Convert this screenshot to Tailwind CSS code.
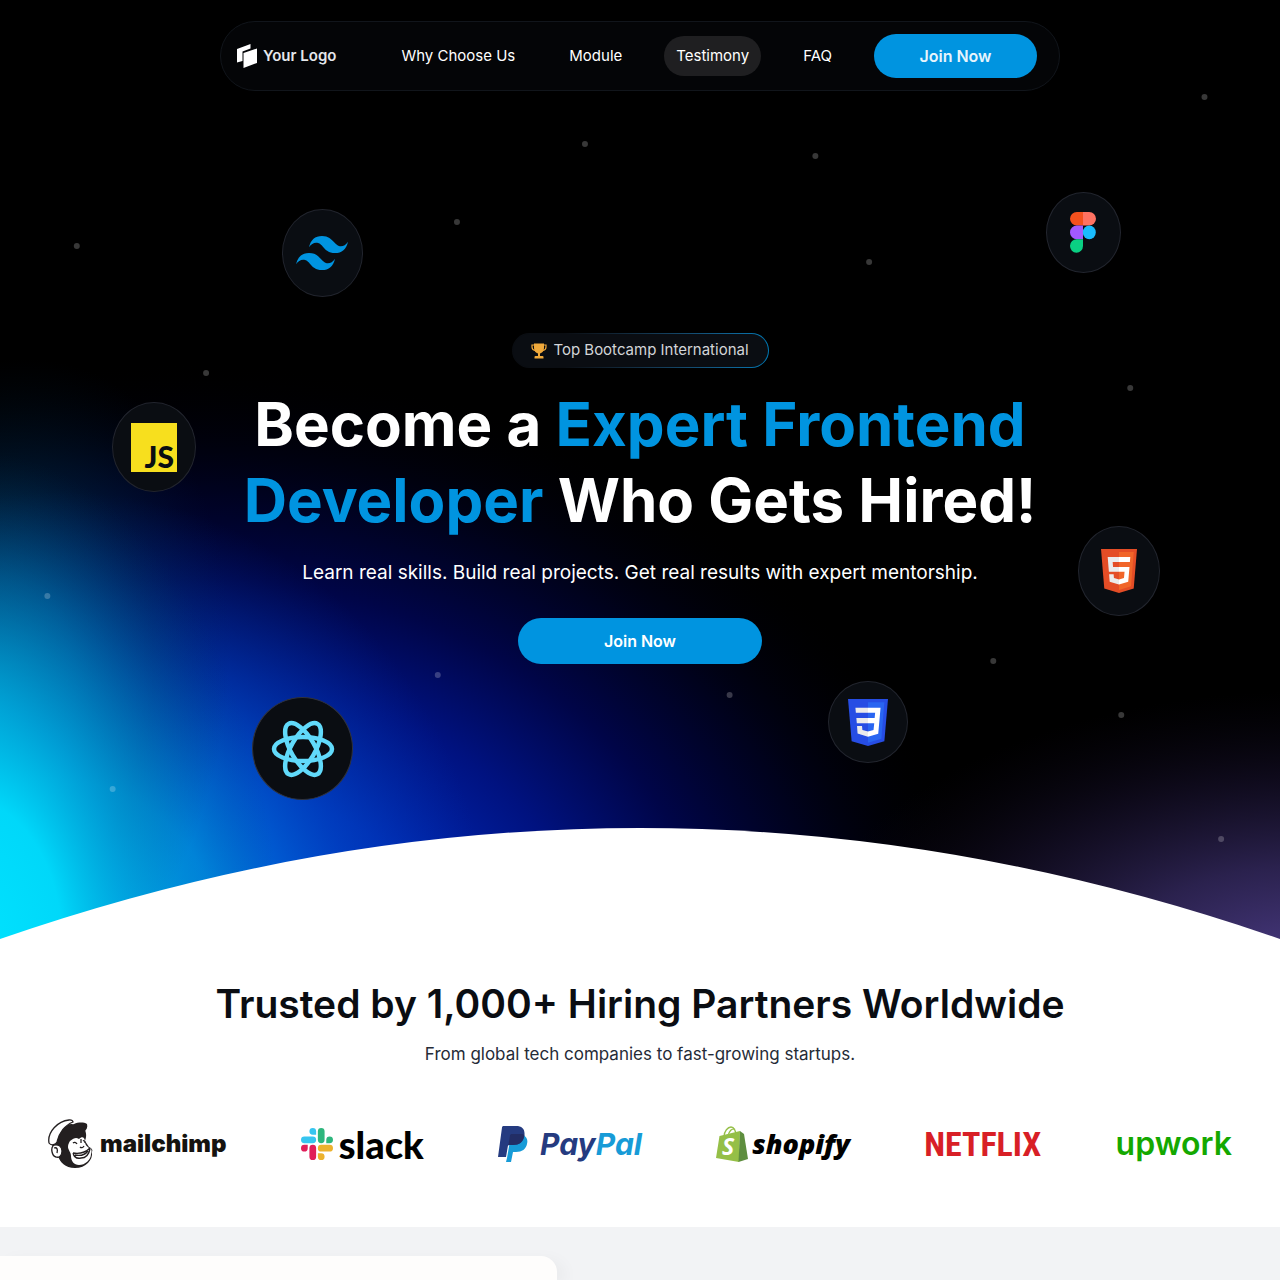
<!DOCTYPE html>
<html lang="en">
<head>
<meta charset="utf-8">
<meta name="viewport" content="width=device-width, initial-scale=1">
<title>Frontend Bootcamp</title>
<script src="https://cdn.jsdelivr.net/npm/@tailwindcss/browser@4"></script>
</head>
<body class="bg-white font-['Inter',sans-serif] text-[#0a0d12] overflow-x-hidden">

<section class="relative flex flex-col items-center overflow-hidden bg-black pt-[21px] text-white">
  <!-- Aurora glow -->
  <svg class="absolute inset-0 h-full w-full" viewBox="0 0 1280 938" preserveAspectRatio="none" aria-hidden="true">
    <defs>
      <radialGradient id="navy" gradientUnits="userSpaceOnUse" cx="0" cy="0" r="1" gradientTransform="translate(220 970) rotate(6) scale(780 610)">
        <stop offset="0" stop-color="#0038d0"/><stop offset=".3" stop-color="#0026b0"/><stop offset=".48" stop-color="#001280"/><stop offset=".64" stop-color="#000548"/><stop offset=".8" stop-color="#00021e" stop-opacity=".9"/><stop offset="1" stop-color="#000" stop-opacity="0"/>
      </radialGradient>
      <radialGradient id="azure" gradientUnits="userSpaceOnUse" cx="0" cy="0" r="1" gradientTransform="translate(50 970) rotate(10) scale(440 480)">
        <stop offset="0" stop-color="#00b4f8"/><stop offset=".4" stop-color="#0090ec" stop-opacity=".85"/><stop offset=".7" stop-color="#005cd0" stop-opacity=".4"/><stop offset="1" stop-color="#0038b0" stop-opacity="0"/>
      </radialGradient>
      <radialGradient id="cyan" gradientUnits="userSpaceOnUse" cx="0" cy="0" r="1" gradientTransform="translate(-30 950) scale(310 500)">
        <stop offset="0" stop-color="#00e4ff"/><stop offset=".3" stop-color="#00dcfc" stop-opacity=".95"/><stop offset=".5" stop-color="#00b8e4" stop-opacity=".6"/><stop offset=".75" stop-color="#0088b0" stop-opacity=".25"/><stop offset="1" stop-color="#004060" stop-opacity="0"/>
      </radialGradient>
      <radialGradient id="teal" gradientUnits="userSpaceOnUse" cx="0" cy="0" r="1" gradientTransform="translate(-30 720) rotate(16) scale(250 370)">
        <stop offset="0" stop-color="#00b0d4" stop-opacity=".7"/><stop offset=".4" stop-color="#007ca4" stop-opacity=".45"/><stop offset=".7" stop-color="#004468" stop-opacity=".25"/><stop offset="1" stop-color="#002050" stop-opacity="0"/>
      </radialGradient>
      <radialGradient id="violet" gradientUnits="userSpaceOnUse" cx="0" cy="0" r="1" gradientTransform="translate(1310 980) scale(520 290)">
        <stop offset="0" stop-color="#4f3f8c"/><stop offset=".4" stop-color="#2f2556" stop-opacity=".9"/><stop offset=".7" stop-color="#150f28" stop-opacity=".7"/><stop offset="1" stop-color="#0a0614" stop-opacity="0"/>
      </radialGradient>
    </defs>
    <rect width="1280" height="938" fill="url(#navy)"/>
    <rect width="1280" height="938" fill="url(#azure)"/>
    <rect width="1280" height="938" fill="url(#teal)"/>
    <rect width="1280" height="938" fill="url(#cyan)"/>
    <rect width="1280" height="938" fill="url(#violet)"/>
  </svg>
  <!-- Stars -->
  <svg class="absolute inset-0 h-full w-full" fill="#fff" fill-opacity=".22" aria-hidden="true">
    <circle cx="6%" cy="246" r="3"/><circle cx="35.7%" cy="222" r="3"/><circle cx="45.7%" cy="144" r="3"/><circle cx="63.7%" cy="156" r="3"/><circle cx="94.1%" cy="97" r="3"/><circle cx="67.9%" cy="262" r="3"/><circle cx="16.1%" cy="373" r="3"/><circle cx="88.3%" cy="388" r="3"/><circle cx="3.7%" cy="596" r="3"/><circle cx="34.2%" cy="675" r="3"/><circle cx="57%" cy="695" r="3"/><circle cx="77.6%" cy="661" r="3"/><circle cx="87.6%" cy="715" r="3"/><circle cx="8.8%" cy="789" r="3"/><circle cx="95.4%" cy="839" r="3"/>
  </svg>

  <!-- Floating technology badges -->
  <div class="absolute left-[22%] top-[209px] flex h-[88px] w-[81px] items-center justify-center rounded-[50%] border border-[#22252e] bg-[#0a0d12]">
    <svg class="h-[34px] w-[52px]" viewBox="0 4.8 24 14.4" preserveAspectRatio="none" fill="#0094e0" aria-hidden="true"><path d="M12 4.8c-3.2 0-5.2 1.6-6 4.8 1.2-1.6 2.6-2.2 4.2-1.8.913.228 1.565.89 2.288 1.624C13.666 10.618 15.027 12 18 12c3.2 0 5.2-1.6 6-4.8-1.2 1.6-2.6 2.2-4.2 1.8-.913-.228-1.565-.89-2.288-1.624C16.337 6.182 14.976 4.8 12 4.8zM6 12c-3.2 0-5.2 1.6-6 4.8 1.2-1.6 2.6-2.2 4.2-1.8.913.228 1.565.89 2.288 1.624C7.666 17.818 9.027 19.2 12 19.2c3.2 0 5.2-1.6 6-4.8-1.2 1.6-2.6 2.2-4.2 1.8-.913-.228-1.565-.89-2.288-1.624C10.337 13.382 8.976 12 6 12z"/></svg>
  </div>
  <div class="absolute left-[81.7%] top-[192px] flex h-[81px] w-[75px] items-center justify-center rounded-[50%] border border-[#22252e] bg-[#0a0d12]">
    <svg class="h-[41px] w-[26px]" viewBox="0 0 26 41" aria-hidden="true"><path d="M13 0H6.800a6.800 6.800 0 0 0 0 13.600H13z" fill="#f4511e"/><path d="M13 0h6.200a6.800 6.800 0 0 1 0 13.600H13z" fill="#ff7262"/><path d="M13 13.600H6.800a6.800 6.800 0 0 0 0 13.600H13z" fill="#a259ff"/><ellipse cx="19.300" cy="20.400" rx="6.500" ry="6.800" fill="#1abcfe"/><path d="M13 27.200H6.800A6.500 6.800 0 1 0 13 34z" fill="#0acf83"/></svg>
  </div>
  <div class="absolute left-[8.75%] top-[402px] flex h-[90px] w-[84px] items-center justify-center rounded-[50%] border border-[#22252e] bg-[#0a0d12]">
    <div class="flex h-[49px] w-[46px] items-end justify-end bg-[#f7df1e] pr-[3px] font-['Lato',sans-serif] text-[30px] leading-[32px] font-black text-[#0a0d12]">JS</div>
  </div>
  <div class="absolute left-[84.2%] top-[526px] flex h-[90px] w-[82px] items-center justify-center rounded-[50%] border border-[#22252e] bg-[#0a0d12]">
    <svg class="h-[44px] w-[36px]" viewBox="1.500 0 21 24" preserveAspectRatio="none" aria-hidden="true"><path fill="#e44d26" d="M1.500 0h21l-1.910 21.563L12 24l-8.590-2.438z"/><path fill="#f16529" d="M12 1.700h8.600L19 20.300l-7 2z"/><path fill="#fff" d="M8.531 9.750l-.232-2.718 10.059.003.230-2.622L5.412 4.410l.698 8.010h9.126l-.326 3.426-2.910.804-2.955-.810-.188-2.110H6.248l.330 4.171L12 19.351l5.379-1.443.744-8.157z"/><path fill="#000" fill-opacity=".08" d="M5.412 4.410H12v2.620H8.300l.231 2.720H12v2.670H6.110zM6.248 13.730h2.609l.188 2.110 2.955.810v2.700l-5.422-1.450z"/></svg>
  </div>
  <div class="absolute left-[19.7%] top-[697px] flex h-[103px] w-[101px] items-center justify-center rounded-[50%] border border-[#30323a] bg-[#0a0d12]">
    <svg class="h-[60px] w-[64px]" viewBox="-32 -30 64 60" fill="none" stroke="#61dafb" stroke-width="4.500" aria-hidden="true"><ellipse rx="29" ry="12"/><ellipse rx="29" ry="12" transform="rotate(60)"/><ellipse rx="29" ry="12" transform="rotate(120)"/></svg>
  </div>
  <div class="absolute left-[64.7%] top-[681px] flex h-[82px] w-[80px] items-center justify-center rounded-[50%] border border-[#22252e] bg-[#0a0d12]">
    <svg class="h-[47px] w-[40px]" viewBox="1.500 0 21 24" preserveAspectRatio="none" aria-hidden="true"><path fill="#264de4" d="M1.500 0h21l-1.910 21.563L12 24l-8.590-2.438z"/><path fill="#2965f1" d="M12 1.700h8.600L19 20.300l-7 2z"/><path fill="#fff" d="M18.590 4.413L5.410 4.410l.213 2.622 10.125.002-.255 2.716h-9.600l.240 2.573h9.142l-.366 3.523-2.910.804-2.956-.810-.188-2.110h-2.610l.290 3.855L12 19.288l5.373-1.530z"/><path fill="#000" fill-opacity=".08" d="M5.410 4.410H12v2.620H5.620zM5.890 9.750H12v2.570H6.130zM6.240 13.730h2.610l.188 2.110 2.955.810v2.640l-5.460-1.700z"/></svg>
  </div>

  <header class="relative flex h-[70px] w-full max-w-[840px] items-center justify-between rounded-full border border-[#11151b] bg-[#040507] pl-4 pr-[22px]">
    <a href="#" class="flex items-center gap-1.5 text-[15px] font-semibold text-gray-200">
      <svg class="h-6 w-5" viewBox="0 0 20 24" fill="#fff" aria-hidden="true"><path d="M0 5 13.500 0v4.500L5.500 7.500V17L0 18.500zM6.500 9 20 4.500V19L6.500 24z"/></svg>
      Your Logo
    </a>
    <nav class="flex items-center gap-[30px] text-[15px] leading-6">
      <a href="#why" class="px-3 py-2">Why Choose Us</a>
      <a href="#module" class="px-3 py-2">Module</a>
      <a href="#testimony" class="rounded-full bg-[#1f1f21] px-3 py-2">Testimony</a>
      <a href="#faq" class="px-3 py-2">FAQ</a>
      <button type="button" class="h-11 w-[163px] rounded-full bg-[#0094e0] text-[16px] font-semibold text-[#e6f4fc]">Join Now</button>
    </nav>
  </header>

  <div class="relative mt-[242px] flex flex-col items-center text-center">
    <div class="rounded-full bg-linear-to-r from-[#0a0d12] from-20% to-[#0078b4] p-px">
      <p class="flex h-[33px] w-[255px] items-center justify-center gap-1.5 rounded-full bg-[#0a0d12] text-[15px] text-[#d3d5d8]">
        <svg class="h-4 w-4" viewBox="0 0 16 16" aria-hidden="true"><path d="M3 2H1v2c0 2 1.200 3.200 3 3.500M13 2h2v2c0 2-1.200 3.200-3 3.500" fill="none" stroke="#f0a93b" stroke-width="1.200"/><path d="M3 .500h10V5c0 3-1.800 5-4 5.500V13h2.500a1 1 0 0 1 1 1v1.500h-9V14a1 1 0 0 1 1-1H7v-2.500C4.800 10 3 8 3 5z" fill="#f0a93b"/></svg>
        Top Bootcamp International
      </p>
    </div>
    <h1 class="mt-[18px] text-[60px] leading-[76px] font-bold">Become a <span class="text-[#0094e0]">Expert Frontend<br>Developer</span> Who Gets Hired!</h1>
    <p class="mt-5 text-[19px] leading-[30px]">Learn real skills. Build real projects. Get real results with expert mentorship.</p>
    <button type="button" class="mt-[30px] h-[46px] w-[244px] rounded-full bg-[#0094e0] text-[16px] font-semibold">Join Now</button>
  </div>

  <svg class="relative mt-[164px] block h-[111px] w-full" viewBox="0 0 1280 111" preserveAspectRatio="none" aria-hidden="true"><path d="M0 111Q640-111 1280 111z" fill="#fff"/></svg>
</section>

<section class="flex flex-col items-center px-12 pt-10 pb-[57px] text-center">
  <h2 class="text-[39px] leading-[50px] font-semibold">Trusted by 1,000+ Hiring Partners Worldwide</h2>
  <p class="mt-[13px] text-[17px] leading-6 text-[#252b37]">From global tech companies to fast-growing startups.</p>
  <ul class="mt-[52px] flex h-[52px] w-full items-center justify-between">
    <li class="flex items-center gap-1.5 text-[24px] font-black text-[#15130f]">
      <svg class="h-[50px] w-[46px]" viewBox="0 0 46 50" aria-hidden="true">
        <path d="M4 26C7 12 15 5 24 5l13 6c2 5 1 8 0 11l4 6c3 1 4 3 3 5 1 8-6 16-17 16C17 49 12 43 10 37z" fill="#231f20"/>
        <path d="M22 22c4-3 6-4 9-2 3-3 6-2 6 3 0 3 2 4 4 6 3 0 3 4 2 6 0 6-6 11-12 11-5 0-8-4-8-9 0-4-3-6-3-9 0-3 1-4 2-6z" fill="#fff"/>
        <path d="M1 24C-1 13 10 2 21 1c3-.300 4 1 4 2-8 3-14 11-16 20-1 3-6 4-8 1z" fill="#fff" stroke="#231f20" stroke-width="1.300"/>
        <path d="M21 9c3-5 13-7 18-4 1 3-.500 6-3 8-4-3-9-3-15-2z" fill="#231f20"/>
        <path d="M6 26c4-1 8 1 8 6s-3 7-6 6c-4-1-6-9-2-12z" fill="#fff" stroke="#231f20" stroke-width="1.300"/>
        <path d="M6 29c3-1 4 1 3 5M25 34c6 1 12 0 17-5M25 34c1 4 4 6 8 5 5 0 8-4 9-9M27 36c5 1 10 0 13-4M25 24c1-1 3-1 4 1M33 20v4M35 22c1-1 2 0 2 2M32 28c1 1 3 1 4-1" fill="none" stroke="#231f20" stroke-width="1.300"/>
      </svg>
      mailchimp
    </li>
    <li class="flex items-center gap-1.5 font-['Lato',sans-serif] text-[38px] leading-10 font-black text-black">
      <svg class="h-8 w-8" viewBox="0 0 122.800 122.800" aria-hidden="true"><path d="M25.800 77.600a12.900 12.900 0 1 1-12.900-12.900h12.900zM32.300 77.600a12.900 12.900 0 0 1 25.800 0v32.300a12.900 12.900 0 0 1-25.800 0z" fill="#e01e5a"/><path d="M45.200 25.800a12.900 12.900 0 1 1 12.900-12.900v12.900zM45.200 32.300a12.900 12.900 0 0 1 0 25.800H12.900a12.900 12.900 0 0 1 0-25.800z" fill="#36c5f0"/><path d="M97 45.200a12.900 12.900 0 1 1 12.900 12.900H97zM90.500 45.200a12.900 12.900 0 0 1-25.800 0V12.900a12.900 12.900 0 0 1 25.800 0z" fill="#2eb67d"/><path d="M77.600 97a12.900 12.900 0 1 1-12.900 12.900V97zM77.600 90.500a12.900 12.900 0 0 1 0-25.800h32.300a12.900 12.900 0 0 1 0 25.800z" fill="#ecb22e"/></svg>
      slack
    </li>
    <li class="flex items-center gap-3 text-[30px] font-bold text-[#253b80] italic">
      <svg class="h-9 w-[30px]" viewBox="0 0 30 36" aria-hidden="true"><path d="M9 32 13 9h12c4 2 5 5 4 9-1 5-5 8-11 8h-3l-2 10H8z" fill="#179bd7"/><path d="M4 1.500C4.200.500 4.700 0 5.500 0H18c6 0 9 3 8.500 9-1 7-5 10-12 10h-3c-1 0-1.500.500-1.700 1.500L8 31H0z" fill="#253b80"/><path d="M12 9.500c.200-1 1-1.500 2-1.500h9c1.500 0 2.500.500 3.400 1-1 7-5 10-12 10h-4z" fill="#222d65"/></svg>
      <span>Pay<span class="text-[#179bd7]">Pal</span></span>
    </li>
    <li class="flex items-center gap-1 font-['Open_Sans',sans-serif] text-[27px] leading-10 font-extrabold text-black italic">
      <svg class="h-9 w-8" viewBox="0 0 32 36" aria-hidden="true"><path d="M8 11C8 5 12 1 15 1s5 4 5 9M12 10c1-5 4-8 7-7" fill="none" stroke="#95bf47" stroke-width="1.300"/><path d="M3.500 10 24 5l-1 31L0 32z" fill="#95bf47"/><path d="m24 5 4 3 4 25-9.500 3z" fill="#5e8e3e"/><text x="6" y="29" class="font-['Open_Sans',sans-serif] text-[23px] font-bold" fill="#fff">S</text></svg>
      shopify
    </li>
    <li class="font-['Roboto_Condensed','Liberation_Sans_Narrow',sans-serif] text-[34px] leading-10 font-bold text-[#d81f26]">NETFLIX</li>
    <li class="text-[32px] leading-10 font-semibold text-[#14a800]">upwork</li>
  </ul>
</section>

<section class="bg-[#f2f3f5] pt-[29px]">
  <div class="h-[24px] w-[43.5%] rounded-tr-2xl bg-[#fefdfc] shadow-[8px_4px_16px_#0000000a]"></div>
</section>
</body>
</html>
